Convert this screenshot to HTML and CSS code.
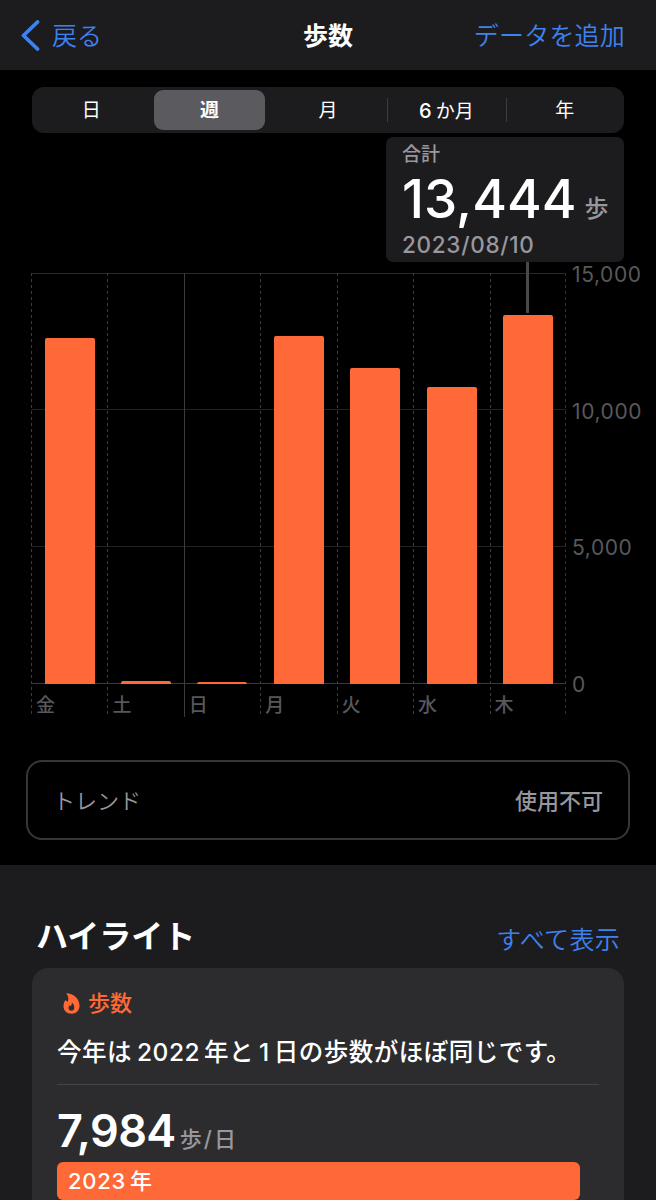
FILE: index.html
```html
<!DOCTYPE html>
<html lang="ja">
    <head>
        <meta charset="UTF-8">
        <meta name="viewport" content="width=device-width, initial-scale=1.0">
        <title>歩数</title>
        <link rel="stylesheet" href="styles.css">
    </head>

    <body>
        <header class="navbar">
            <a class="back">
                <svg width="20" height="32" viewBox="0 0 20 32" fill="none" stroke="currentColor" stroke-width="3.8" stroke-linecap="round" stroke-linejoin="round">
                    <path d="M16.500 2 2.500 15.500 16.500 29"/>
                </svg>
                <span>戻る</span>
            </a>
            <h1>歩数</h1>
            <a class="add">データを追加</a>
        </header>

        <main class="steps">
            <nav class="tabs">
                <span class="tab">日</span>
                <span class="tab active">週</span>
                <span class="tab">月</span>
                <span class="tab divided"><b class="num">6</b>か月</span>
                <span class="tab divided">年</span>
            </nav>

            <div class="total">
                <div class="total-label">合計</div>
                <div class="total-value"><span class="total-num">13,444</span><span class="total-unit">歩</span></div>
                <div class="total-date">2023/08/10</div>
            </div>

            <div class="chart">
                <div class="plot">
                    <div class="day"><div class="track"><div class="bar" style="height: 346px"></div></div><span>金</span></div>
                    <div class="day"><div class="track"><div class="bar" style="height: 3px"></div></div><span>土</span></div>
                    <div class="day week-start"><div class="track"><div class="bar" style="height: 2px"></div></div><span>日</span></div>
                    <div class="day"><div class="track"><div class="bar" style="height: 348px"></div></div><span>月</span></div>
                    <div class="day"><div class="track"><div class="bar" style="height: 316px"></div></div><span>火</span></div>
                    <div class="day"><div class="track"><div class="bar" style="height: 297px"></div></div><span>水</span></div>
                    <div class="day"><div class="track"><div class="bar" style="height: 369px"></div></div><span>木</span></div>
                </div>
                <div class="scale">
                    <span>15,000</span>
                    <span>10,000</span>
                    <span>5,000</span>
                    <span>0</span>
                </div>
            </div>

            <div class="trend">
                <span class="trend-name">トレンド</span>
                <span class="trend-state">使用不可</span>
            </div>
        </main>

        <section class="highlights">
            <div class="section-head">
                <h2>ハイライト</h2>
                <a class="show-all">すべて表示</a>
            </div>

            <article class="card">
                <div class="card-title">
                    <svg width="17" height="21" viewBox="0 0 17 21">
                        <path fill="currentColor" fill-rule="evenodd" d="M3.200.300C10 .200 16.500 5.500 16.500 12.700c0 4.700-3.200 8-8 8S.500 17.500.500 13.200c0-2.800.9-4.500 2-6.200.5.900 1.200 1.500 2.300 1.700C5.900 5.700 5.400 2.800 3.200.300ZM8.800 9.600C8.900 11.500 8.500 12.300 7.900 13 7.300 12.900 6.900 12.600 6.600 12.200 5.900 13.100 5.500 14 5.500 14.800c0 1.800 1.200 2.900 2.900 2.900s2.900-1.200 2.900-3c0-2-.9-3.800-2.500-5.100Z"/>
                    </svg>
                    <span>歩数</span>
                </div>
                <p class="summary">今年は<span class="num">2022</span>年と<span class="num">1</span>日の歩数がほぼ同じです。</p>
                <div class="average"><span class="average-num">7,984</span><span class="average-unit">歩<i>/</i>日</span></div>
                <div class="year-bar"><span class="num">2023</span>年</div>
            </article>
        </section>
    </body>
</html>
```

FILE: styles.css
```css
* {
    box-sizing: border-box;
}

body {
    margin: 0;
    width: 656px;
    height: 1200px;
    overflow: hidden;
    background: #1c1c1e;
    color: #fff;
    font-family: Inter, "Noto Sans CJK JP", sans-serif;
}

h1, h2, p {
    margin: 0;
}

.navbar {
    height: 70px;
    padding: 1px 31px 0 21px;
    display: grid;
    grid-template-columns: 1fr auto 1fr;
    align-items: center;
    background: #1c1c1e;
    line-height: 36px;
    font-size: 25px;
}

.navbar h1 {
    font-size: 25px;
    font-weight: 700;
    margin-left: 10px;
}

.back, .add, .show-all {
    color: #3e82f0;
    font-weight: 350;
}

.back {
    display: flex;
    align-items: center;
    gap: 11px;
}

.add {
    text-align: right;
    letter-spacing: 0.2px;
}

.steps {
    height: 795px;
    padding: 17px 26px 0;
    background: #000;
}

.tabs {
    height: 46px;
    margin: 0 6px;
    padding: 3px 0;
    display: grid;
    grid-template-columns: repeat(5, 1fr);
    border-radius: 12px;
    background: #1c1c1f;
    font-size: 19px;
    line-height: 42px;
    text-align: center;
}

.tab {
    position: relative;
    height: 40px;
}

.tab .num {
    font-size: 20px;
    font-weight: 500;
    margin-right: 4px;
}

.tab.active {
    margin: 0 4px;
    border-radius: 9px;
    background: #5b5a5f;
    font-weight: 700;
}

.tab.divided::before {
    content: "";
    position: absolute;
    left: 0;
    top: 8px;
    width: 1px;
    height: 24px;
    background: #3d3d41;
}

.total {
    position: relative;
    width: 238px;
    height: 125px;
    margin: 4px 6px 0 auto;
    padding: 6px 16px 0;
    border-radius: 7px;
    background: #1c1c1e;
    color: #98979d;
    font-weight: 500;
}

/* stem down to the selected bar */
.total::after {
    content: "";
    position: absolute;
    left: 140px;
    top: 125px;
    width: 3px;
    height: 51px;
    background: #48484a;
}

.total-label {
    font-size: 19px;
    line-height: 24px;
}

.total-value {
    display: flex;
    align-items: baseline;
    gap: 8px;
    height: 66px;
    line-height: 65px;
    white-space: nowrap;
}

.total-num {
    color: #fff;
    font-size: 53px;
    font-weight: 500;
}

.total-unit {
    position: relative;
    top: -1px;
    font-size: 24px;
}

.total-date {
    font-size: 22.5px;
    line-height: 24px;
    letter-spacing: 0.7px;
}

.chart {
    display: flex;
    margin: 11px 0 0 5px;
    height: 444px;
    color: #58585b;
}

.plot {
    flex: none;
    display: flex;
    width: 535px;
    height: 444px;
    background:
        linear-gradient(#29292b, #29292b) 0 0 / 100% 1px no-repeat,
        linear-gradient(#222224, #222224) 0 136px / 100% 1px no-repeat,
        linear-gradient(#222224, #222224) 0 273px / 100% 1px no-repeat,
        linear-gradient(#3a3a3c, #3a3a3c) 0 410px / 100% 1px no-repeat,
        repeating-linear-gradient(#333335 0 3px, #000 3px 6px) 100% 0 / 1px 100% no-repeat;
}

.day {
    flex: 1;
    background: repeating-linear-gradient(#3c3c3f 0 3px, transparent 3px 6px) 0 0 / 1px 100% no-repeat;
}

.day.week-start {
    background: linear-gradient(#3c3c3f, #3c3c3f) 0 0 / 1px 100% no-repeat;
}

.track {
    height: 411px;
    display: flex;
    align-items: flex-end;
    padding-left: 13.5px;
}

.bar {
    width: 50px;
    border-radius: 2px 2px 0 0;
    background: #ff6937;
}

.day span {
    display: block;
    padding-left: 5px;
    font-size: 19px;
    font-weight: 500;
    line-height: 43px;
    height: 33px;
}

.scale {
    flex: none;
    display: flex;
    flex-direction: column;
    justify-content: space-between;
    height: 430px;
    margin: -8px 0 0 6px;
    font-size: 21px;
    line-height: 20px;
    letter-spacing: 0.6px;
}

.trend {
    height: 80px;
    margin-top: 43px;
    padding: 0 25px 3px;
    display: flex;
    align-items: center;
    justify-content: space-between;
    border: 2px solid #363638;
    border-radius: 16px;
    color: #98979d;
    font-size: 22px;
}

.trend-name {
    font-weight: 350;
}

.trend-state {
    font-weight: 500;
}

.highlights {
    padding: 49px 32px 0;
}

.section-head {
    height: 54px;
    padding: 0 4px;
    display: flex;
    justify-content: space-between;
    line-height: 46px;
}

.section-head h2 {
    font-size: 32px;
    font-weight: 700;
}

.show-all {
    padding-top: 3px;
    font-size: 25px;
    letter-spacing: 0.3px;
}

.card {
    height: 260px;
    padding: 19px 25px 0;
    border-radius: 16px;
    background: #2c2c2e;
}

.card-title {
    display: flex;
    align-items: center;
    gap: 8px;
    padding-left: 6px;
    color: #ff6937;
    font-size: 22px;
    font-weight: 500;
    line-height: 32px;
}

.summary {
    height: 66px;
    padding-top: 15px;
    border-bottom: 1px solid #454547;
    font-size: 24.5px;
    font-weight: 500;
    line-height: 36px;
    letter-spacing: 0.5px;
    white-space: nowrap;
}

.summary .num {
    margin: 0 4px 0 5px;
}

.average {
    display: flex;
    align-items: baseline;
    gap: 4px;
    height: 77px;
    padding-top: 16px;
    line-height: 60px;
}

.average-num {
    font-size: 45px;
    font-weight: 600;
    letter-spacing: -0.6px;
}

.average-unit {
    color: #98979d;
    font-size: 22px;
    font-weight: 500;
}

.average-unit i {
    margin: 0 2px;
    font-style: normal;
}

.year-bar {
    width: 523px;
    height: 38px;
    padding-left: 11px;
    border-radius: 6px;
    background: #ff6937;
    font-size: 22px;
    font-weight: 500;
    line-height: 39px;
    letter-spacing: 0.7px;
}

.year-bar .num {
    margin-right: 4px;
}
```
